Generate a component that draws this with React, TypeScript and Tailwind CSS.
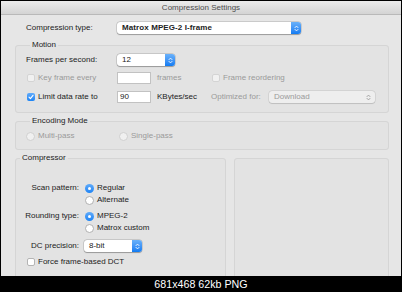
import type { ReactNode } from 'react'

const TEXT = 'text-[#222222]'
const DIM = 'text-[#9a9a9a]'

function Stepper({ disabled }: { disabled?: boolean }) {
  return (
    <svg width="5" height="7" viewBox="0 0 5 7" className="shrink-0">
      <path
        d="M1 2.6 L2.5 1.1 L4 2.6 M1 4.4 L2.5 5.9 L4 4.4"
        fill="none"
        stroke={disabled ? '#9a9a9a' : '#ffffff'}
        strokeWidth="0.9"
        strokeLinecap="round"
        strokeLinejoin="round"
      />
    </svg>
  )
}

function Popup({ value, w, bold, disabled }: { value: string; w: string; bold?: boolean; disabled?: boolean }) {
  if (disabled) {
    return (
      <div className={`${w} flex h-[12px] items-center justify-between rounded-[3px] bg-[#eeeeee] pl-[5px] pr-[4px] shadow-[0_0_0_0.5px_rgba(0,0,0,0.12),0_0.5px_1px_rgba(0,0,0,0.1)]`}>
        <span className={DIM}>{value}</span>
        <Stepper disabled />
      </div>
    )
  }
  return (
    <div className={`${w} flex h-[12px] items-stretch rounded-[3px] bg-white shadow-[0_0_0_0.5px_rgba(0,0,0,0.2),0_0.5px_1px_rgba(0,0,0,0.25)]`}>
      <span className={`flex flex-1 items-center pl-[5px] ${TEXT} ${bold ? 'font-bold tracking-[0.1px]' : ''}`}>{value}</span>
      <span className="flex w-[10px] items-center justify-center rounded-r-[3px] bg-gradient-to-b from-[#69b1fa] to-[#0d7bf2]">
        <Stepper />
      </span>
    </div>
  )
}

function Check({ checked, disabled }: { checked?: boolean; disabled?: boolean }) {
  if (checked) {
    return (
      <span className="flex h-[8px] w-[8px] shrink-0 items-center justify-center rounded-[2px] bg-gradient-to-b from-[#5eaafa] to-[#1a84f5]">
        <svg width="6" height="6" viewBox="0 0 6 6">
          <path d="M1 3.2 L2.4 4.6 L5 1.3" fill="none" stroke="#fff" strokeWidth="1.1" strokeLinecap="round" strokeLinejoin="round" />
        </svg>
      </span>
    )
  }
  return (
    <span
      className={`h-[8px] w-[8px] shrink-0 rounded-[2px] border ${
        disabled ? 'border-[#d4d4d4] bg-[#f1f1f1]' : 'border-[#b4b4b4] bg-white'
      }`}
    />
  )
}

function Radio({ checked, disabled }: { checked?: boolean; disabled?: boolean }) {
  if (checked) {
    return (
      <span className="flex h-[9px] w-[9px] shrink-0 items-center justify-center rounded-full bg-gradient-to-b from-[#5eaafa] to-[#1a84f5]">
        <span className="h-[3px] w-[3px] rounded-full bg-white" />
      </span>
    )
  }
  return (
    <span
      className={`h-[9px] w-[9px] shrink-0 rounded-full border ${
        disabled ? 'border-[#d0d0d0] bg-[#f0f0f0]' : 'border-[#b0b0b0] bg-white'
      }`}
    />
  )
}

function Field({ title, className, children }: { title?: string; className: string; children?: ReactNode }) {
  return (
    <fieldset className={`rounded-[3px] border border-[#d5d5d5] bg-[#e3e3e3] ${className}`}>
      {title && <legend className={`ml-[4px] px-[2px] leading-[10px] ${TEXT}`}>{title}</legend>}
      {children}
    </fieldset>
  )
}

function TextBox({ value }: { value?: string }) {
  return (
    <div className={`flex h-[12px] w-[34px] items-center border border-[#c2c2c2] bg-white pl-[2px] ${TEXT}`}>
      {value}
    </div>
  )
}

export default function App() {
  return (
    <div className="h-[292px] w-[402px] bg-black px-px pt-px font-['Liberation_Sans',Arial,sans-serif] text-[8px] leading-[10px]">
      <div className="flex h-[275px] flex-col overflow-hidden bg-[#e6e6e6]">
        <div className="flex h-[14px] shrink-0 items-center justify-center border-b border-[#b9b9b9] bg-gradient-to-b from-[#ececec] to-[#d4d4d4] text-[#4d4d4d]">
          Compression Settings
        </div>

        <div className="flex flex-col pl-[14px] pr-[12px]">
          <div className="ml-[11px] mt-[7px] flex h-[12px] items-center">
            <span className={`w-[91px] ${TEXT}`}>Compression type:</span>
            <Popup value="Matrox MPEG-2 I-frame" w="w-[184px]" bold />
          </div>

          <Field title="Motion" className="mt-[6px] pb-[9px] pl-[10px]">
            <div className="mt-[4px] flex h-[12px] items-center">
              <span className={`w-[91px] ${TEXT}`}>Frames per second:</span>
              <Popup value="12" w="w-[58px]" />
            </div>
            <div className="mt-[6px] flex h-[12px] items-center">
              <span className="flex w-[91px] items-center gap-[3px] pl-px">
                <Check disabled />
                <span className={DIM}>Key frame every</span>
              </span>
              <TextBox />
              <span className={`ml-[6px] w-[54px] ${DIM}`}>frames</span>
              <span className="flex items-center gap-[3px] pl-px">
                <Check disabled />
                <span className={DIM}>Frame reordering</span>
              </span>
            </div>
            <div className="mt-[7px] flex h-[12px] items-center">
              <span className="flex w-[91px] items-center gap-[3px] pl-px">
                <Check checked />
                <span className={TEXT}>Limit data rate to</span>
              </span>
              <TextBox value="90" />
              <span className={`ml-[6px] w-[54px] ${TEXT}`}>KBytes/sec</span>
              <span className={`w-[58px] ${DIM}`}>Optimized for:</span>
              <Popup value="Download" w="w-[106px]" disabled />
            </div>
          </Field>

          <Field title="Encoding Mode" className="mt-[3px] pb-[8px] pl-[10px]">
            <div className="mt-[5px] flex h-[10px] items-center">
              <span className="flex w-[93px] items-center gap-[3px]">
                <Radio disabled />
                <span className={DIM}>Multi-pass</span>
              </span>
              <span className="flex items-center gap-[3px]">
                <Radio disabled />
                <span className={DIM}>Single-pass</span>
              </span>
            </div>
          </Field>

          <div className="mt-[3px] flex items-start gap-[8px]">
            <Field title="Compressor" className="h-[160px] w-[211px] shrink-0">
              <div className="mt-[20px] flex h-[10px] items-center">
                <span className={`w-[63px] text-right ${TEXT}`}>Scan pattern:</span>
                <span className="ml-[6px] flex items-center gap-[3px]">
                  <Radio checked />
                  <span className={TEXT}>Regular</span>
                </span>
              </div>
              <div className="ml-[69px] mt-[2px] flex h-[10px] items-center gap-[3px]">
                <Radio />
                <span className={TEXT}>Alternate</span>
              </div>
              <div className="mt-[6px] flex h-[10px] items-center">
                <span className={`w-[63px] text-right ${TEXT}`}>Rounding type:</span>
                <span className="ml-[6px] flex items-center gap-[3px]">
                  <Radio checked />
                  <span className={TEXT}>MPEG-2</span>
                </span>
              </div>
              <div className="ml-[69px] mt-[2px] flex h-[10px] items-center gap-[3px]">
                <Radio />
                <span className={TEXT}>Matrox custom</span>
              </div>
              <div className="mt-[7px] flex h-[12px] items-center">
                <span className={`w-[63px] text-right ${TEXT}`}>DC precision:</span>
                <span className="ml-[5px]">
                  <Popup value="8-bit" w="w-[58px]" />
                </span>
              </div>
              <div className="ml-[11px] mt-[5px] flex h-[10px] items-center gap-[3px]">
                <Check />
                <span className={TEXT}>Force frame-based DCT</span>
              </div>
            </Field>
            <Field className="mt-[5px] h-[160px] flex-1" />
          </div>
        </div>
      </div>
      <div className="flex h-[16px] items-center justify-center text-[10.7px] text-white">681x468 62kb PNG</div>
    </div>
  )
}
